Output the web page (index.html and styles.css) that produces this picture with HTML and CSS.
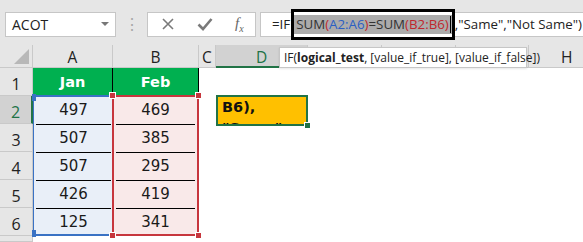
FILE: index.html
```html
<!DOCTYPE html>
<html lang="en">
<head>
    <meta charset="UTF-8">
    <title>IF SUM formula</title>
    <link rel="stylesheet" href="styles.css">
</head>
<body>
    <div class="excel">
        <div class="toolbar">
            <div class="namebox">
                <span>ACOT</span>
                <span class="caret"></span>
            </div>
            <div class="dots">&#8942;</div>
            <div class="fx-buttons">
                <svg width="14" height="14" viewBox="0 0 14 14"><path d="M2 2 L12 12 M12 2 L2 12" stroke="#7a7a7a" stroke-width="1.6" fill="none"/></svg>
                <svg width="16" height="14" viewBox="0 0 16 14"><path d="M1.5 7.5 L6 12 L14.5 2" stroke="#7a7a7a" stroke-width="2.6" fill="none"/></svg>
                <span class="fx">f<sub>x</sub></span>
            </div>
            <div class="formula">=IF<span class="hl">SUM<span class="red">(</span><span class="blue">A2:A6</span><span class="red">)</span>=SUM<span class="red">(B2:B6)</span><span class="cursor"></span></span>,"Same","Not Same")</div>
        </div>

        <div class="sheet">
            <div class="corner"><span class="tri"></span></div>
            <div class="colhead">A</div>
            <div class="colhead">B</div>
            <div class="colhead">C</div>
            <div class="colhead active">D</div>
            <div class="colhead"></div>
            <div class="colhead"></div>
            <div class="colhead"></div>
            <div class="colhead last">H</div>

            <div class="rowhead r1">1</div>
            <div class="rowhead r2 active">2</div>
            <div class="rowhead r3">3</div>
            <div class="rowhead r4">4</div>
            <div class="rowhead r5">5</div>
            <div class="rowhead r6">6</div>
            <div class="rowhead r7"></div>

            <div class="head-cell col-a">Jan</div>
            <div class="head-cell col-b">Feb</div>

            <div class="range range-a">
                <div class="cell">497</div>
                <div class="cell">507</div>
                <div class="cell">507</div>
                <div class="cell">426</div>
                <div class="cell">125</div>
                <span class="handle tl"></span>
                <span class="handle bl"></span>
            </div>
            <div class="range range-b">
                <div class="cell">469</div>
                <div class="cell">385</div>
                <div class="cell">295</div>
                <div class="cell">419</div>
                <div class="cell">341</div>
                <span class="handle tl"></span>
                <span class="handle tr"></span>
                <span class="handle bl"></span>
                <span class="handle br"></span>
            </div>

            <div class="active-cell">
                <div class="edit-text">B6),<br>"Same"</div>
                <span class="fill-handle"></span>
            </div>
        </div>

        <div class="tip">IF(<b>logical_test</b>, [value_if_true], [value_if_false])</div>
    </div>
</body>
</html>
```

FILE: styles.css
```css
body {
    margin: 0;
    background: #ffffff;
}
.excel {
    position: relative;
    width: 583px;
    height: 242px;
    overflow: hidden;
    font-family: "Open Sans", "Liberation Sans", sans-serif;
}

/* top bar */
.toolbar {
    height: 45px;
    background: #e6e6e6;
    display: flex;
    align-items: center;
    padding-left: 5px;
    box-sizing: border-box;
    padding-top: 3px;
}
.toolbar > * {
    flex-shrink: 0;
}
.namebox {
    width: 111px;
    height: 25px;
    box-sizing: border-box;
    background: #fff;
    border: 1px solid #c6c6c6;
    display: flex;
    align-items: center;
    justify-content: space-between;
    padding: 0 6px 0 6px;
    font-size: 14px;
    color: #222;
}
.caret {
    width: 0;
    height: 0;
    border-left: 4px solid transparent;
    border-right: 4px solid transparent;
    border-top: 4px solid #777;
}
.dots {
    width: 31px;
    text-align: center;
    color: #a8a8a8;
    font-size: 16px;
}
.fx-buttons {
    width: 109px;
    height: 25px;
    box-sizing: border-box;
    background: #fff;
    border: 1px solid #c6c6c6;
    display: flex;
    align-items: center;
    gap: 22px;
    padding-left: 13px;
}
.fx {
    font-family: "Liberation Serif", serif;
    font-style: italic;
    font-size: 15px;
    color: #666;
}
.fx sub {
    font-size: 10px;
}
.toolbar > .formula {
    margin-left: 4px;
    flex: 1 1 auto;
    min-width: 0;
    height: 25px;
    box-sizing: border-box;
    background: #fff;
    border: 1px solid #c6c6c6;
    border-right: none;
    display: flex;
    align-items: center;
    padding-left: 11px;
    font-size: 13.3px;
    color: #222;
    white-space: nowrap;
}
.hl {
    display: inline-block;
    height: 25px;
    line-height: 25px;
    margin: 0 0 0 1px;
    padding: 0 1px 0 2px;
    border: 3px solid #000;
    background: linear-gradient(#fff 0, #fff 3px, #ababab 3px, #ababab 22px, #fff 22px);
    color: #333;
}
.blue { color: #2a5fc4; }
.red { color: #c0272d; }
.cursor {
    display: inline-block;
    width: 1px;
    height: 17px;
    background: #000;
    margin-left: 1px;
    vertical-align: -4px;
}

/* sheet grid */
.sheet {
    display: grid;
    grid-template-columns: 33px 80px 86px 17px 92px 74px 74px 73px 1fr;
    grid-template-rows: 23px repeat(6, 28px) 1fr;
    height: 197px;
}
.corner {
    background: #e6e6e6;
    border-right: 1px solid #c9c9c9;
    border-bottom: 1px solid #c9c9c9;
    position: relative;
}
.tri {
    position: absolute;
    right: 3px;
    bottom: 3px;
    width: 0;
    height: 0;
    border-left: 15px solid transparent;
    border-bottom: 15px solid #b8b8b8;
}
.colhead {
    background: #e6e6e6;
    border-right: 1px solid #c9c9c9;
    border-bottom: 1px solid #c9c9c9;
    text-align: center;
    font-size: 15.5px;
    line-height: 24px;
    color: #222;
}
.colhead.active {
    background: #d2d2d2;
    border-bottom: 2px solid #217346;
    color: #217346;
}
.colhead.last {
    grid-column: 9;
    border-right: none;
    text-align: left;
    padding-left: 32px;
}
.rowhead {
    grid-column: 1;
    background: #e6e6e6;
    border-right: 1px solid #c9c9c9;
    border-bottom: 1px solid #c9c9c9;
    text-align: center;
    font-size: 16px;
    line-height: 32px;
    color: #222;
}
.rowhead.active {
    background: #d2d2d2;
    border-right: 2px solid #217346;
    color: #217346;
}
.r1 { grid-row: 2; }
.r2 { grid-row: 3; }
.r3 { grid-row: 4; }
.r4 { grid-row: 5; }
.r5 { grid-row: 6; }
.r6 { grid-row: 7; }
.r7 { grid-row: 8; }

.head-cell {
    grid-row: 2;
    background: #00b050;
    color: #fff;
    font-family: "DejaVu Sans", Tahoma, sans-serif;
    font-weight: bold;
    font-size: 14.5px;
    text-align: center;
    line-height: 28px;
    border-right: 1px solid #000;
}
.col-a { grid-column: 2; }
.col-b { grid-column: 3; }

.range {
    grid-row: 3 / 8;
    position: relative;
    display: flex;
    flex-direction: column;
    margin-top: -1px;
    font-family: "DejaVu Sans", Tahoma, sans-serif;
    font-size: 15px;
    color: #1a1a1a;
}
.range-a {
    grid-column: 2;
    background: #e9eff8;
    border-top: 2px solid #3a72c4;
    border-bottom: 2px solid #3a72c4;
    border-left: 1px solid #3a72c4;
}
.range-b {
    grid-column: 3;
    background: #f9e9e9;
    border: 2px solid #c7363d;
    margin-left: -1px;
}
.cell {
    flex: 1;
    text-align: center;
    line-height: 27px;
    border-bottom: 1px solid #000;
    margin: 0 2px;
}
.cell:last-of-type {
    border-bottom: none;
}
.handle {
    position: absolute;
    width: 5px;
    height: 5px;
    background: #c7363d;
    border: 1px solid #fff;
}
.range-a .handle { background: #3a72c4; border-color: #3a72c4; width: 2px; }
.range-a .tl { left: -2px; top: -3px; }
.range-a .bl { left: -2px; bottom: -3px; }
.range-b .tl { left: -5px; top: -5px; }
.range-b .tr { right: -5px; top: -5px; }
.range-b .bl { left: -5px; bottom: -5px; }
.range-b .br { right: -5px; bottom: -5px; }

.active-cell {
    grid-column: 5;
    grid-row: 3;
    position: relative;
    margin-top: -1px;
    height: 31px;
    box-sizing: border-box;
    background: #ffc000;
    border: 2px solid #217346;
}
.edit-text {
    height: 27px;
    overflow: hidden;
    padding-left: 4px;
    font-family: "DejaVu Sans", Tahoma, sans-serif;
    font-weight: bold;
    font-size: 14.5px;
    line-height: 21px;
    color: #111;
}
.fill-handle {
    position: absolute;
    right: -4px;
    bottom: -4px;
    width: 5px;
    height: 5px;
    background: #217346;
    border-left: 1px solid #fff;
    border-top: 1px solid #fff;
}

/* function tooltip over the headers */
.tip {
    position: absolute;
    left: 279px;
    top: 47px;
    width: 248px;
    height: 21px;
    box-sizing: border-box;
    background: #fff;
    border: 1px solid #c6c6c6;
    font-size: 12px;
    line-height: 19px;
    padding-left: 4px;
    color: #222;
    white-space: nowrap;
    box-shadow: 0 1px 2px rgba(0,0,0,0.1);
}
```
